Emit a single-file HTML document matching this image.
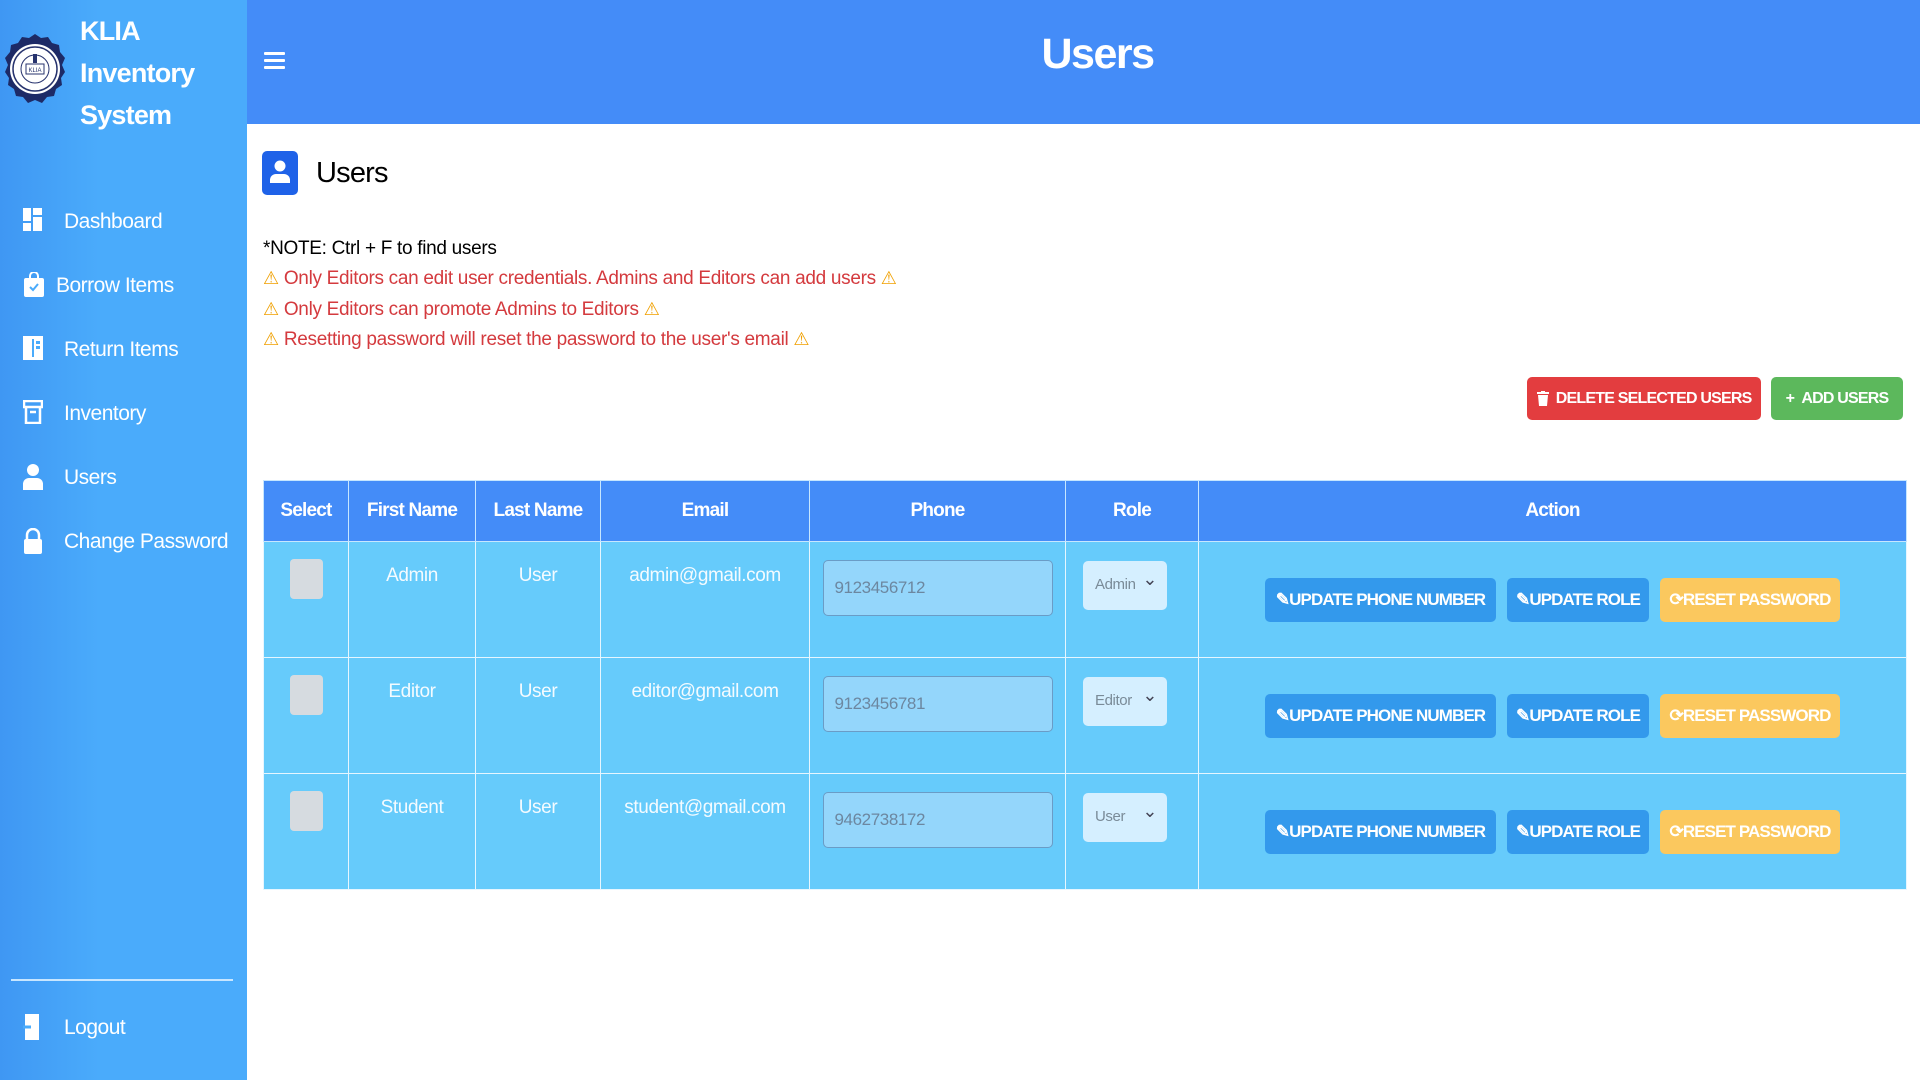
<!DOCTYPE html>
<html><head><meta charset="utf-8"><style>
*{box-sizing:border-box;margin:0;padding:0}
body{width:1920px;height:1080px;overflow:hidden;font-family:"Liberation Sans",sans-serif;background:#fff;position:relative}
#side{position:absolute;left:0;top:0;width:247px;height:1080px;background:linear-gradient(90deg,#3f97f3,#4aabfb 40%,#4aabfb);color:#fff}
#side .brand{position:absolute;left:80px;top:10px;font-size:27px;font-weight:bold;line-height:42px;letter-spacing:-0.8px}
#side .logo{position:absolute;left:3px;top:32px}
.nav{position:absolute;left:0;width:247px;height:30px;font-size:21px;letter-spacing:-0.5px}
.nav svg{position:absolute;left:23px;top:2px}
.nav span{position:absolute;left:64px;top:4px;white-space:nowrap}
#hdr{position:absolute;left:247px;top:0;width:1673px;height:124px;background:#448cf8}
#hdr h1{position:absolute;left:28px;right:0;top:30px;text-align:center;color:#fff;font-size:43px;font-weight:bold;letter-spacing:-1.5px}
.burger{position:absolute;left:17px;top:52px;width:21px}
.burger i{display:block;height:3px;background:#fff;margin-bottom:4px;border-radius:1px}
.abs{position:absolute}
.note{left:263px;font-size:19px;letter-spacing:-0.3px;white-space:nowrap}
.red{color:#d43a3e}
.warn{color:#f0a000;font-size:18px}
.btn{position:absolute;color:#fff;font-weight:bold;font-size:16px;letter-spacing:-0.8px;border-radius:5px;display:flex;align-items:center;justify-content:center;white-space:nowrap}
table{position:absolute;left:263px;top:480px;width:1644px;border-collapse:collapse;font-size:19px;letter-spacing:-0.4px}
th{background:#448cf8;color:#fff;height:61px;font-size:19px;letter-spacing:-0.8px;border:1.5px solid #c6e6ff}
td{background:#66cbfb;color:#f4fbff;border:1.5px solid #e6f6ff;height:116px;vertical-align:top;text-align:center;padding-top:23px;position:relative}
.cb{width:33px;height:40px;background:#d6dbe0;border-radius:4px;margin:0 auto;margin-top:-6px}
.ph{width:230px;height:56px;margin:-5px auto 0;background:#94d6fb;border:1.5px solid #6a9cc6;border-radius:5px;color:#6c87a0;font-size:17px;text-align:left;padding:17px 11px}
.sel{width:84px;height:49px;margin:-4px auto 0 17px;background:#d5efff;border-radius:5px;color:#7a8b98;font-size:15px;text-align:left;padding:15px 12px;position:relative}
.sel:after{content:"⌄";position:absolute;right:10px;top:8px;font-size:18px;color:#445}
.acts{position:absolute;top:36px;left:0;width:100%;height:44px}
.ab{position:absolute;top:0;height:44px;border-radius:5px;color:#fff;font-weight:bold;font-size:17px;letter-spacing:-0.9px;display:flex;align-items:center;justify-content:center;white-space:nowrap}
</style></head><body>
<div id="side">
<svg class="logo" width="64" height="76" viewBox="0 0 64 76"><path d="M32 2 L38 6 45 5 49 11 56 13 57 20 62 26 59 33 62 40 58 46 59 53 53 57 51 64 44 65 39 71 32 68 25 71 20 65 13 64 11 57 5 53 6 46 2 40 5 33 2 26 7 20 8 13 15 11 19 5 26 6Z" fill="#1d2a66"/><circle cx="32" cy="37" r="25" fill="#fff"/><circle cx="32" cy="37" r="22" fill="none" stroke="#27336e" stroke-width="1.5"/><circle cx="32" cy="37" r="14" fill="none" stroke="#27336e" stroke-width="1"/><rect x="23" y="32" width="18" height="10" fill="none" stroke="#27336e"/><text x="32" y="40" font-size="6" text-anchor="middle" fill="#27336e" font-family="Liberation Sans">KLIA</text><path d="M30 22h4v9h-4z" fill="#27336e"/></svg>
<div class="brand">KLIA<br>Inventory<br>System</div>
<div class="nav" style="top:206px"><svg width="20" height="24" viewBox="0 0 20 24" fill="#fff"><rect x="0" y="0" width="8" height="13"/><rect x="10" y="0" width="9" height="7"/><rect x="0" y="15" width="8" height="8"/><rect x="10" y="9" width="9" height="14"/></svg><span>Dashboard</span></div>
<div class="nav" style="top:270px"><svg width="22" height="26" viewBox="0 0 22 26" fill="#fff"><path d="M7 6V4a4 4 0 0 1 8 0v2" stroke="#fff" stroke-width="2" fill="none"/><rect x="1" y="6" width="20" height="19" rx="2"/><path d="M7 15l3 3 5-6" stroke="#4aabfb" stroke-width="2" fill="none"/></svg><span style="left:56px">Borrow Items</span></div>
<div class="nav" style="top:334px"><svg width="20" height="24" viewBox="0 0 20 24" fill="#fff"><path d="M0 0h20v24H0z"/><rect x="9" y="3" width="2" height="18" fill="#4aabfb"/><rect x="13" y="5" width="4" height="3" fill="#4aabfb"/><rect x="13" y="10" width="4" height="3" fill="#4aabfb"/></svg><span>Return Items</span></div>
<div class="nav" style="top:398px"><svg width="20" height="24" viewBox="0 0 20 24" fill="none" stroke="#fff" stroke-width="2.5"><rect x="1" y="1" width="18" height="6"/><path d="M3 7v16h14V7"/><path d="M7 12h6"/></svg><span>Inventory</span></div>
<div class="nav" style="top:462px"><svg width="20" height="26" viewBox="0 0 20 26" fill="#fff"><circle cx="10" cy="6" r="6"/><path d="M0 26v-6a6 6 0 0 1 6-6h8a6 6 0 0 1 6 6v6z"/></svg><span>Users</span></div>
<div class="nav" style="top:526px"><svg width="20" height="26" viewBox="0 0 20 26" fill="#fff"><path d="M4 11V7a6 6 0 0 1 12 0v4" stroke="#fff" stroke-width="2.5" fill="none"/><rect x="1" y="11" width="18" height="15" rx="2"/></svg><span>Change Password</span></div>
<div class="abs" style="left:11px;top:979px;width:222px;height:2px;background:#c8e6ff"></div>
<div class="nav" style="top:1012px"><svg width="18" height="26" viewBox="0 0 18 26" fill="#fff"><rect x="2" y="0" width="14" height="26"/><path d="M0 13h8" stroke="#4aabfb" stroke-width="3"/></svg><span>Logout</span></div>
</div>
<div id="hdr"><div class="burger"><i></i><i></i><i></i></div><h1>Users</h1></div>
<div class="abs" style="left:262px;top:151px;width:36px;height:44px;background:#1f62e8;border-radius:5px"><svg width="36" height="44" viewBox="0 0 36 44" fill="#fff"><circle cx="18" cy="15" r="5.5"/><path d="M8 32v-3a6 6 0 0 1 6-6h8a6 6 0 0 1 6 6v3z"/></svg></div>
<div class="abs" style="left:316px;top:157px;font-size:29px;letter-spacing:-0.8px">Users</div>
<div class="abs note" style="top:238px">*NOTE: Ctrl + F to find users</div>
<div class="abs note red" style="top:268px"><span class="warn">⚠</span> Only Editors can edit user credentials. Admins and Editors can add users <span class="warn">⚠</span></div>
<div class="abs note red" style="top:299px"><span class="warn">⚠</span> Only Editors can promote Admins to Editors <span class="warn">⚠</span></div>
<div class="abs note red" style="top:329px"><span class="warn">⚠</span> Resetting password will reset the password to the user's email <span class="warn">⚠</span></div>
<div class="btn" style="left:1527px;top:377px;width:234px;height:43px;background:#e33d3f"><svg width="12" height="15" viewBox="0 0 12 15" fill="#fff"><rect x="0" y="1" width="12" height="2"/><rect x="4" y="0" width="4" height="2"/><path d="M1 4h10l-1 11H2z"/></svg>&nbsp;&nbsp;DELETE SELECTED USERS</div>
<div class="btn" style="left:1771px;top:377px;width:132px;height:43px;background:#5cb85c">+&nbsp;&nbsp;ADD USERS</div>
<table>
<tr><th style="width:85px">Select</th><th style="width:127px">First Name</th><th style="width:125px">Last Name</th><th style="width:209px">Email</th><th style="width:256px">Phone</th><th style="width:133px">Role</th><th>Action</th></tr>
<tr><td><div class="cb"></div></td><td>Admin</td><td>User</td><td>admin@gmail.com</td><td><div class="ph">9123456712</div></td><td><div class="sel">Admin</div></td><td><div class="acts"><div class="ab" style="left:66px;width:231px;background:#3399ec">✎UPDATE PHONE NUMBER</div><div class="ab" style="left:308px;width:142px;background:#3399ec">✎UPDATE ROLE</div><div class="ab" style="left:461px;width:180px;background:#fbc85e">⟳RESET PASSWORD</div></div></td></tr>
<tr><td><div class="cb"></div></td><td>Editor</td><td>User</td><td>editor@gmail.com</td><td><div class="ph">9123456781</div></td><td><div class="sel">Editor</div></td><td><div class="acts"><div class="ab" style="left:66px;width:231px;background:#3399ec">✎UPDATE PHONE NUMBER</div><div class="ab" style="left:308px;width:142px;background:#3399ec">✎UPDATE ROLE</div><div class="ab" style="left:461px;width:180px;background:#fbc85e">⟳RESET PASSWORD</div></div></td></tr>
<tr><td><div class="cb"></div></td><td>Student</td><td>User</td><td>student@gmail.com</td><td><div class="ph">9462738172</div></td><td><div class="sel">User</div></td><td><div class="acts"><div class="ab" style="left:66px;width:231px;background:#3399ec">✎UPDATE PHONE NUMBER</div><div class="ab" style="left:308px;width:142px;background:#3399ec">✎UPDATE ROLE</div><div class="ab" style="left:461px;width:180px;background:#fbc85e">⟳RESET PASSWORD</div></div></td></tr>
</table>
</body></html>
